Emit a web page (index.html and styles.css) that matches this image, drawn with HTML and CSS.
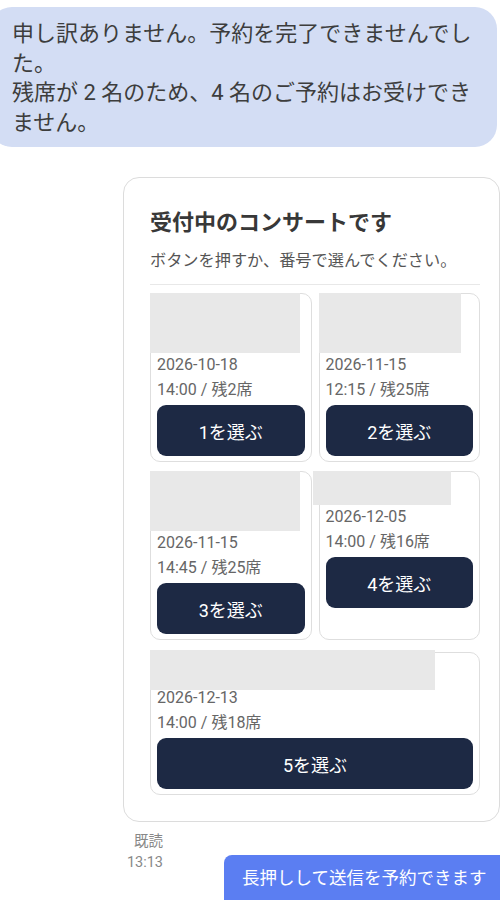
FILE: index.html
```html
<!DOCTYPE html>
<html lang="ja">
<head>
  <meta charset="UTF-8" />
  <meta name="viewport" content="width=device-width, initial-scale=1.0" />
  <title>コンサート予約</title>
  <link rel="stylesheet" href="styles.css">
</head>
<body>
  <div class="bubble bot">
    申し訳ありません。予約を完了できませんでした。<br>
    残席が 2 名のため、4 名のご予約はお受けできません。
  </div>

  <div class="card">
    <h2>受付中のコンサートです</h2>
    <p class="lead">ボタンを押すか、番号で選んでください。</p>

    <div class="grid">
      <div class="item">
        <div class="thumb" style="width:150px;height:60px"></div>
        <div class="info">2026-10-18<br>14:00 / 残2席</div>
        <button>1を選ぶ</button>
      </div>
      <div class="item">
        <div class="thumb" style="width:142px;height:60px"></div>
        <div class="info">2026-11-15<br>12:15 / 残25席</div>
        <button>2を選ぶ</button>
      </div>
      <div class="item">
        <div class="thumb" style="width:150px;height:60px"></div>
        <div class="info">2026-11-15<br>14:45 / 残25席</div>
        <button>3を選ぶ</button>
      </div>
      <div class="item">
        <div class="thumb shift" style="width:138px;height:34px"></div>
        <div class="info">2026-12-05<br>14:00 / 残16席</div>
        <button>4を選ぶ</button>
      </div>
      <div class="item wide">
        <div class="thumb overlap" style="width:285px;height:40px"></div>
        <div class="info">2026-12-13<br>14:00 / 残18席</div>
        <button>5を選ぶ</button>
      </div>
    </div>
  </div>

  <div class="footer">
    <div class="meta">既読<br>13:13</div>
    <div class="bubble me">長押しして送信を予約できます</div>
  </div>
</body>
</html>
```

FILE: styles.css
```css
body {
  margin: 0;
  background: #fff;
  font-family: Roboto, "Noto Sans CJK JP", sans-serif;
  color: #333;
  width: 500px;
  height: 900px;
  overflow: hidden;
}
.bubble.bot {
  margin: 7px 0 0 -10px;
  width: 465px;
  padding: 12px 20px 10px 22px;
  background: #d3ddf4;
  border-radius: 22px;
  font-size: 22px;
  line-height: 29.5px;
  color: #3d3d3d;
}
.card {
  margin: 30px 0 0 123px;
  width: 330px;
  padding: 30px 19px 26px 26px;
  border: 1px solid #dcdcdc;
  border-radius: 16px;
}
.card h2 {
  margin: 0;
  font-size: 22px;
  line-height: 29px;
  font-weight: bold;
  color: #383838;
}
.lead {
  margin: 12px 0 0;
  padding-bottom: 11px;
  border-bottom: 1px solid #e8e8e8;
  font-size: 16.2px;
  line-height: 24px;
  color: #555;
}
.grid {
  margin-top: 8px;
  display: grid;
  grid-template-columns: 1fr 1fr;
  gap: 9px 7px;
}
.item {
  border: 1px solid #dedede;
  border-radius: 10px;
  padding: 0 6px 5px;
  display: flex;
  flex-direction: column;
}
.item.wide {
  grid-column: span 2;
  margin-top: 3px;
}
.thumb {
  background: #e8e8e8;
  margin: -1px 0 0 -7px;
  flex: none;
}
.thumb.shift {
  margin-left: -13px;
}
.thumb.overlap {
  margin-top: -3px;
  margin-bottom: -4px;
}
.info {
  margin-top: -1px;
  font-size: 16px;
  line-height: 25px;
  color: #666;
}
.item button {
  margin-top: 3px;
  height: 51px;
  border: none;
  border-radius: 9px;
  background: #1d2944;
  color: #fff;
  font-family: Roboto, "Noto Sans CJK JP", sans-serif;
  font-size: 18px;
}
.footer {
  display: flex;
  align-items: flex-start;
  margin-top: 9px;
}
.meta {
  width: 163px;
  text-align: right;
  font-size: 14.5px;
  line-height: 21px;
  color: #888;
  flex: none;
}
.bubble.me {
  margin: 24px 0 0 61px;
  padding: 11px 30px 20px 18px;
  background: #5b7ef2;
  color: #fff;
  border-radius: 8px 0 0 0;
  font-size: 17.5px;
  line-height: 24px;
  white-space: nowrap;
}
```
